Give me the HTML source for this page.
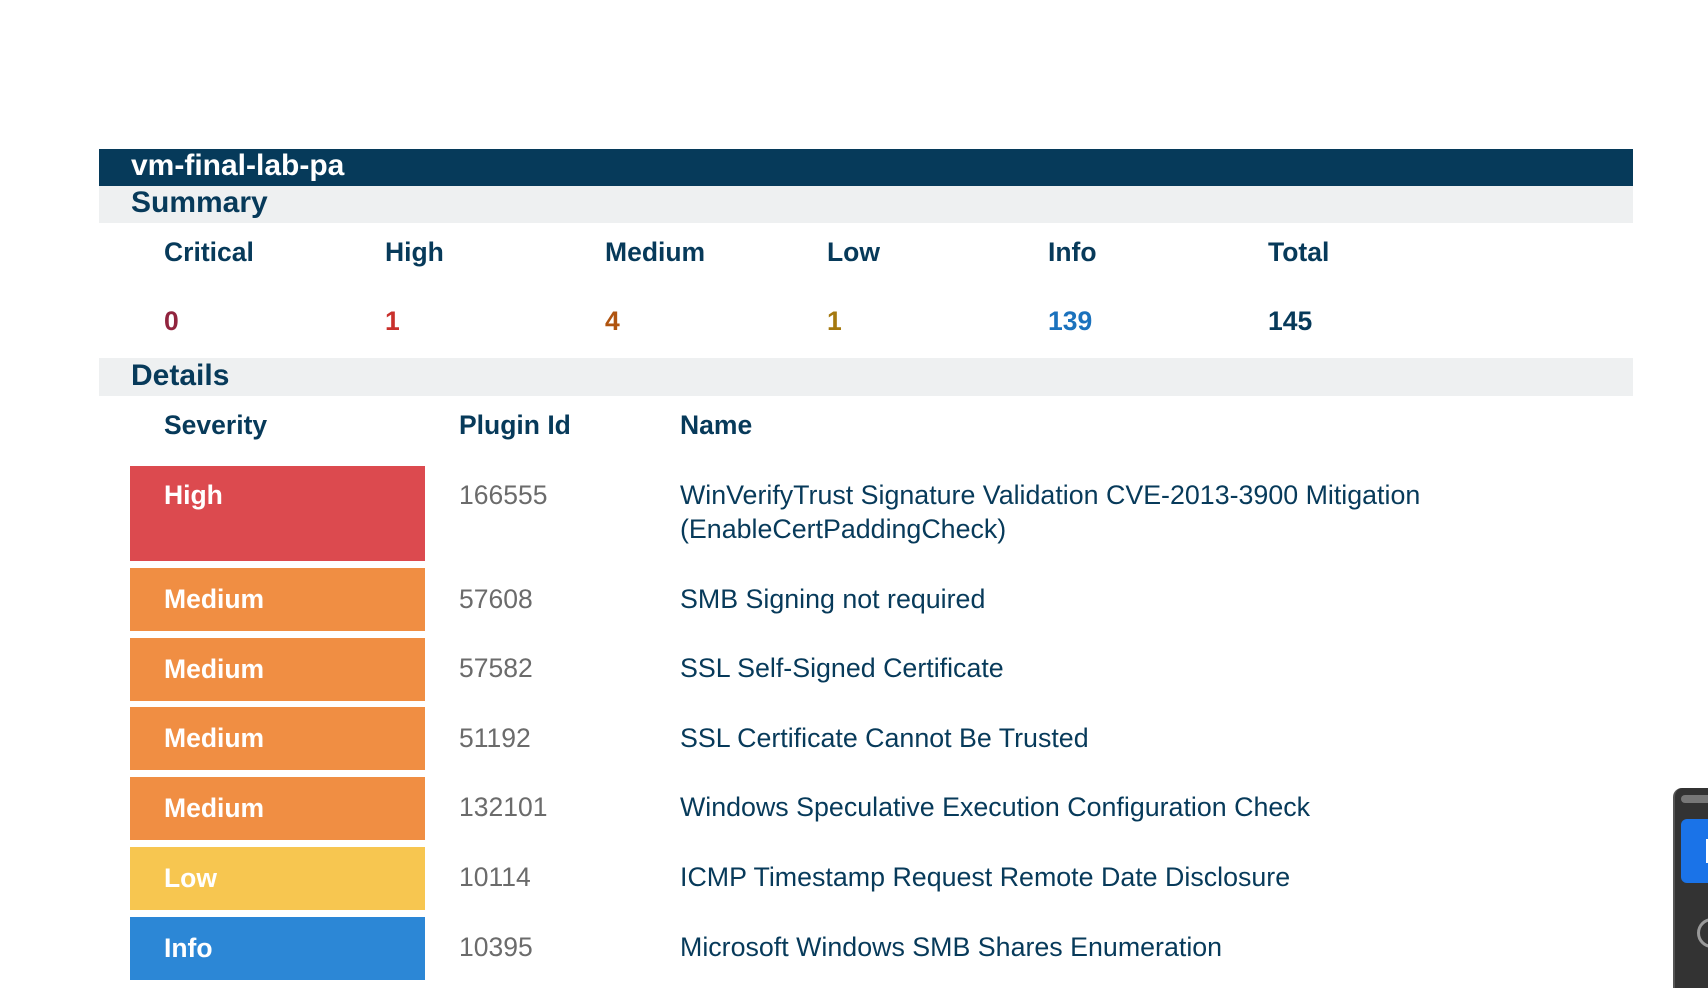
<!DOCTYPE html>
<html><head><meta charset="utf-8"><style>
*{margin:0;padding:0;box-sizing:border-box}
body{width:1708px;height:980px;overflow:hidden;background:#fff;font-family:"Liberation Sans",Arial,sans-serif;position:relative;color:#073a5a}
.a{position:absolute;white-space:nowrap}
.bar{position:absolute;left:99px;width:1534px}
.b{font-weight:bold}
.h{font-size:26.5px}
.box{position:absolute;left:130px;width:295px;color:#fff;font-weight:bold;font-size:26.5px;padding-left:34px}
.pid{position:absolute;left:459px;color:#6b6b6b;font-size:26.5px}
.nm{position:absolute;left:680px;color:#073a5a;font-size:26.8px;line-height:34px;white-space:nowrap}
</style></head><body>
<div class="bar" style="top:149px;height:37px;background:#063a5a"></div>
<div class="a b" style="left:131px;top:148px;font-size:30px;color:#fff;line-height:36px">vm-final-lab-pa</div>
<div class="bar" style="top:186px;height:37px;background:#eef0f1"></div>
<div class="a b" style="left:131px;top:185px;font-size:30px;line-height:36px">Summary</div>

<div class="a b h" style="left:164px;top:237px">Critical</div>
<div class="a b h" style="left:385px;top:237px">High</div>
<div class="a b h" style="left:605px;top:237px">Medium</div>
<div class="a b h" style="left:827px;top:237px">Low</div>
<div class="a b h" style="left:1048px;top:237px">Info</div>
<div class="a b h" style="left:1268px;top:237px">Total</div>

<div class="a b h" style="left:164px;top:306px;color:#91243e">0</div>
<div class="a b h" style="left:385px;top:306px;color:#c9302c">1</div>
<div class="a b h" style="left:605px;top:306px;color:#b0540f">4</div>
<div class="a b h" style="left:827px;top:306px;color:#a5790f">1</div>
<div class="a b h" style="left:1048px;top:306px;color:#1b72bd">139</div>
<div class="a b h" style="left:1268px;top:306px">145</div>

<div class="bar" style="top:358px;height:38px;background:#eef0f1"></div>
<div class="a b" style="left:131px;top:357px;font-size:30px;line-height:38px">Details</div>

<div class="a b h" style="left:164px;top:410px">Severity</div>
<div class="a b h" style="left:459px;top:410px">Plugin Id</div>
<div class="a b h" style="left:680px;top:410px">Name</div>

<div class="box" style="top:466px;height:95px;background:#dc4a4f;padding-top:14px">High</div>
<div class="pid" style="top:480px">166555</div>
<div class="nm" style="top:478px">WinVerifyTrust Signature Validation CVE-2013-3900 Mitigation<br>(EnableCertPaddingCheck)</div>

<div class="box" style="top:568px;height:63px;background:#f08e43;line-height:63px">Medium</div>
<div class="pid" style="top:568px;line-height:63px">57608</div>
<div class="nm" style="top:568px;line-height:63px">SMB Signing not required</div>

<div class="box" style="top:638px;height:63px;background:#f08e43;line-height:63px">Medium</div>
<div class="pid" style="top:637px;line-height:63px">57582</div>
<div class="nm" style="top:637px;line-height:63px">SSL Self-Signed Certificate</div>

<div class="box" style="top:707px;height:63px;background:#f08e43;line-height:63px">Medium</div>
<div class="pid" style="top:707px;line-height:63px">51192</div>
<div class="nm" style="top:707px;line-height:63px">SSL Certificate Cannot Be Trusted</div>

<div class="box" style="top:777px;height:63px;background:#f08e43;line-height:63px">Medium</div>
<div class="pid" style="top:776px;line-height:63px">132101</div>
<div class="nm" style="top:776px;line-height:63px">Windows Speculative Execution Configuration Check</div>

<div class="box" style="top:847px;height:63px;background:#f7c650;line-height:63px">Low</div>
<div class="pid" style="top:846px;line-height:63px">10114</div>
<div class="nm" style="top:846px;line-height:63px">ICMP Timestamp Request Remote Date Disclosure</div>

<div class="box" style="top:917px;height:63px;background:#2c87d6;line-height:63px">Info</div>
<div class="pid" style="top:916px;line-height:63px">10395</div>
<div class="nm" style="top:916px;line-height:63px">Microsoft Windows SMB Shares Enumeration</div>

<div style="position:absolute;left:1673px;top:788px;width:60px;height:200px;background:#333;border-radius:9px 0 0 0;border-left:2px solid #555"></div>
<div style="position:absolute;left:1681px;top:795px;width:40px;height:8px;background:#777;border-radius:4px"></div>
<div style="position:absolute;left:1681px;top:819px;width:40px;height:64px;background:#1a73e8;border-radius:6px"></div>
<div style="position:absolute;left:1706px;top:839px;width:4px;height:24px;background:#fff"></div>
<div style="position:absolute;left:1697px;top:918px;width:30px;height:30px;border:3px solid #999;border-radius:50%"></div>
</body></html>
